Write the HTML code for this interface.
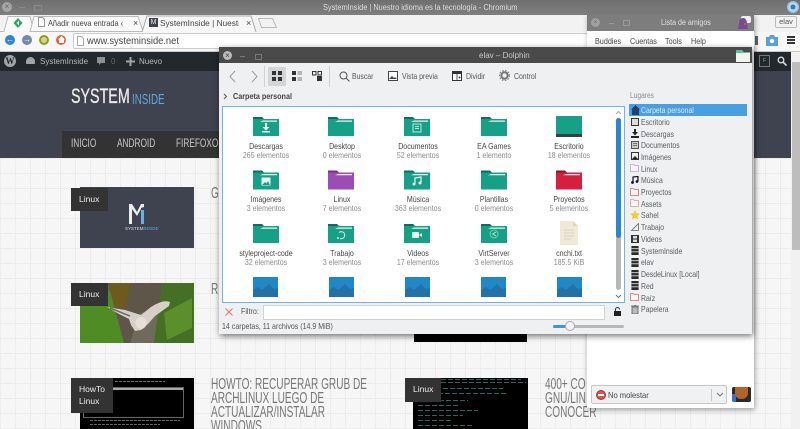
<!DOCTYPE html>
<html><head><meta charset="utf-8"><style>
html,body{margin:0;padding:0;width:800px;height:429px;overflow:hidden;background:#f5f5f5}
body{position:relative;font-family:"Liberation Sans",sans-serif;font-size:8.5px;color:#444;filter:blur(.35px)}
div,svg,span.a{position:absolute}
.t{position:absolute;white-space:nowrap;line-height:12px}
.c{transform:translateX(-50%) scaleX(.85);text-align:center}
.n{transform-origin:0 0;transform:scaleX(.72)}
.x{transform-origin:0 0;transform:scaleX(.83)}
.x9{transform-origin:0 0;transform:scaleX(.89)}
.nm{color:#444;font-size:8.300px}
.sb{color:#8a8d90;font-size:8.300px}
.sd{color:#5a5d60;font-size:8.500px;left:641px;transform-origin:0 0;transform:scaleX(.81)}
.h{font-size:15.500px;color:#777;line-height:14px;transform-origin:0 0;transform:scaleX(.65)}
.lab{background:#333;color:#eee;font-size:8.500px;line-height:12px}
</style></head><body>
<svg width="0" height="0" style="position:absolute"><defs>
<symbol id="f" viewBox="0 0 26 19"><path d="M0 2h26v17H0z" fill="#16a085"/><path d="M0 0h9l2 2H0z" fill="#0e6e5c"/><path d="M10 3.500h14v1.300H7z" fill="#e8f5f2"/></symbol>
<symbol id="pf" viewBox="0 0 26 19"><path d="M0 2h26v17H0z" fill="#9b4db5"/><path d="M0 0h9l2 2H0z" fill="#6f3382"/><path d="M10 3.500h14v1.300H7z" fill="#f3e8f7"/></symbol>
<symbol id="rf" viewBox="0 0 26 19"><path d="M0 2h26v17H0z" fill="#d81e3f"/><path d="M0 0h9l2 2H0z" fill="#7a2020"/><path d="M10 3.500h14v1.300H7z" fill="#fbe6ea"/></symbol>
<symbol id="im" viewBox="0 0 25 20"><rect width="25" height="20" fill="#1f88c6"/><path d="M0 20v-7l5-3 4 3 7-6 5 5 4-1v9z" fill="#2471a8"/></symbol>
<symbol id="srv" viewBox="0 0 8 10"><rect width="8" height="10" fill="#2a2a2a"/><path d="M0 3h8M0 6.500h8" stroke="#ddd"/></symbol>
<symbol id="lf" viewBox="0 0 9 8"><path d="M.5 .5h3l1 1h4v6h-8z" fill="#fdf7fa" stroke="currentColor" stroke-width=".8"/></symbol>
</defs></svg>

<!-- page background -->
<div style="left:0;top:158px;width:791px;height:271px;background-color:#f6f6f6;background-image:linear-gradient(#ececec 1px,transparent 1px),linear-gradient(90deg,#ececec 1px,transparent 1px);background-size:15px 15px"></div>
<div style="left:0;top:71px;width:791px;height:87px;background:#3f4350"></div>
<div style="left:0;top:52px;width:791px;height:19px;background:#23282d"></div>
<div style="left:791px;top:52px;width:9px;height:377px;background:#f1f1f1"></div>
<div style="left:792px;top:62px;width:8px;height:188px;background:#bdbdbd"></div>

<!-- WP bar -->
<div style="left:4px;top:55px;width:12px;height:12px;border-radius:50%;background:#a0a5aa;color:#23282d;font:bold 9px/12px 'Liberation Serif',serif;text-align:center">W</div>
<div style="left:26px;top:57px;width:9px;height:7px;border-radius:5px 5px 1px 1px;background:#a0a5aa"></div>
<span class="t" style="left:40px;top:56px;color:#b4b9be;font-size:8px">SystemInside</span>
<svg style="left:96px;top:56px" width="10" height="10"><path d="M1 1h8v6H5L3 9V7H1z" fill="#8c9095"/></svg>
<span class="t" style="left:111px;top:56px;color:#666;font-size:8px">0</span>
<svg style="left:126px;top:57px" width="9" height="9"><path d="M3.500 0h2v3.500H9v2H5.500V9h-2V5.500H0v-2h3.500z" fill="#a0a5aa"/></svg>
<span class="t" style="left:139px;top:56px;color:#b4b9be;font-size:8px">Nuevo</span>
<div style="left:759px;top:55px;width:9px;height:10px;border:1px solid #777;color:#999;font-size:5px;line-height:10px;text-align:center">F</div>
<svg style="left:777px;top:56px" width="10" height="10"><circle cx="4" cy="4" r="2.800" fill="none" stroke="#ddd" stroke-width="1.300"/><path d="M6 6l3.500 3.500" stroke="#ddd" stroke-width="1.600"/></svg>

<!-- site header -->
<span class="t" style="left:71px;top:87px;color:#ececec;font-size:21px;line-height:20px;transform-origin:0 0;transform:scaleX(.68);-webkit-text-stroke:.3px #ececec">SYSTEM</span>
<span class="t" style="left:132px;top:92px;color:#5fa8d8;font-size:15px;line-height:15px;transform-origin:0 0;transform:scaleX(.65)">INSIDE</span>
<div style="left:62px;top:131px;width:160px;height:27px;background:#333"></div>
<span class="t n" style="left:71px;top:138px;color:#c8c8c8;font-size:11.500px">INICIO</span>
<span class="t n" style="left:117px;top:138px;color:#c8c8c8;font-size:11.500px">ANDROID</span>
<span class="t n" style="left:176px;top:138px;color:#c8c8c8;font-size:11.500px">FIREFOXOS</span>

<!-- card 1 -->
<div style="left:80px;top:187px;width:114px;height:61px;background:#3f4350"></div>
<svg style="left:129px;top:204px" width="16" height="20"><path d="M0 0h3l5 8 4-8h3v3l-3 1v2H12v-1L8 12 3 5v15H0z" fill="#ececec"/><rect x="12" y="6" width="3" height="14" fill="#5fb3ea"/></svg>
<span class="t" style="left:125px;top:226px;color:#ddd;font-size:4.500px;line-height:6px">SYSTEM<span style="color:#5fa8d8">INSIDE</span></span>
<div class="lab" style="left:71px;top:188px;width:37px;height:23px"><span class="t" style="left:8px;top:5px">Linux</span></div>
<span class="t h" style="left:211px;top:187px">G</span>

<!-- card 2 -->
<svg style="left:80px;top:283px" width="114" height="60" viewBox="0 0 114 60"><rect width="114" height="60" fill="#4d7a28"/><path d="M0 20l30-12 10 30 10 22H0z" fill="#4f8c24"/><path d="M28 0h60l-12 60H44z" fill="#5e5648"/><path d="M30 0h20l-4 26-12-2z" fill="#6e5a1c"/><path d="M60 30l20-6 6 36H50z" fill="#6f6a5c"/><path d="M82 0h32v60H74z" fill="#456f24"/><path d="M84 30l28-15v30l-25 12z" fill="#5a8f2c"/><path d="M27 24l18 3 16 5 10-8c8-5 14-7 19-5l-1 4-14 10-7 8-7 6-6 1-4-6-2-6-10-5z" fill="#d6d0c8"/><ellipse cx="61" cy="40" rx="5.500" ry="6" fill="#e8e0d4"/><path d="M30 25l20 8" stroke="#6a6a70" stroke-width="1.500"/></svg>
<div class="lab" style="left:71px;top:283px;width:37px;height:23px"><span class="t" style="left:8px;top:5px">Linux</span></div>
<span class="t h" style="left:211px;top:283px">R</span>

<!-- card 3 -->
<svg style="left:80px;top:378px" width="114" height="51" viewBox="0 0 114 51"><rect width="114" height="51" fill="#000"/><rect x="3.500" y="9.500" width="100" height="30" fill="none" stroke="#666"/><rect x="5" y="10" width="98" height="2" fill="#aaa"/><path d="M35 3.500h50M10 42.500h90M10 46.500h70" stroke="#666" stroke-dasharray="3 1"/></svg>
<div class="lab" style="left:71px;top:378px;width:42px;height:35px"><span class="t" style="left:8px;top:5px">HowTo</span><span class="t" style="left:8px;top:17px">Linux</span></div>
<span class="t h" style="left:211px;top:378px">HOWTO: RECUPERAR GRUB DE</span>
<span class="t h" style="left:211px;top:392px">ARCHLINUX LUEGO DE</span>
<span class="t h" style="left:211px;top:406px">ACTUALIZAR/INSTALAR</span>
<span class="t h" style="left:211px;top:420px">WINDOWS</span>

<!-- card 4 -->
<div style="left:414px;top:334px;width:113px;height:8px;background:#000"></div>
<svg style="left:413px;top:378px" width="115" height="51" viewBox="0 0 115 51"><rect width="115" height="51" fill="#000"/><path d="M28 1.500h80M28 4.500h85M30 10.500h60M25 15.500h70M5 22.500h50M5 27.500h40M5 32.500h60M5 37.500h45M5 42.500h35M5 47.500h55" stroke="#2c8c7c" stroke-width=".8" stroke-dasharray="5 2"/></svg>
<div class="lab" style="left:405px;top:378px;width:36px;height:24px"><span class="t" style="left:8px;top:5px">Linux</span></div>
<span class="t h" style="left:545px;top:378px">400+ CO</span>
<span class="t h" style="left:545px;top:392px">GNU/LIN</span>
<span class="t h" style="left:545px;top:406px">CONOCER</span>

<!-- Chromium chrome -->
<div style="left:0;top:0;width:800px;height:15px;background:linear-gradient(#6f6f6f,#7f7f7f)"></div>
<div style="left:2px;top:2px;width:10px;height:10px;border-radius:50%;background:#a5a5a5;color:#666;font-size:8px;line-height:10px;text-align:center">×</div>
<div style="left:19px;top:7px;width:6px;height:1px;background:#8a8a8a"></div>
<div style="left:34px;top:5px;width:6px;height:4px;border:1px solid #8a8a8a"></div>
<span class="t x9" style="left:323px;top:1px;color:#dcdcdc;font-size:8.300px">SystemInside | Nuestro idioma es la tecnología - Chromium</span>
<div style="left:787px;top:1px;width:12px;height:12px;border-radius:50%;background:radial-gradient(circle,#2a7fd0 30%,#dfe6ec 32%,#9ec5e5 60%,#6ba7d8)"></div>
<div style="left:0;top:15px;width:800px;height:17px;background:#f2f2f2"></div>
<div style="left:0;top:32px;width:800px;height:20px;background:#f7f7f7"></div>
<div style="left:0;top:51px;width:800px;height:1px;background:#c8c8c8"></div>
<svg style="left:0;top:15px" width="280" height="18"><path d="M0 16.500h4l4-15h22l4 15" fill="#fafafa" stroke="#bbb"/><path d="M30 16.500l4-15h104l5 15z" fill="#fafafa" stroke="#bbb"/><path d="M142 17l5-16h104l5 16" fill="#f7f7f7" stroke="#aaa"/><path d="M258.500 3.500h14l4 9h-15z" fill="#f2f2f2" stroke="#bbb"/></svg>
<svg style="left:13px;top:17px" width="10" height="12"><path d="M5 1l4.500 5L5 11 .5 6z" fill="#2aa65a"/><path d="M3.500 6L6 3.500v5z" fill="#fff"/></svg>
<svg style="left:38px;top:17px" width="7" height="10"><path d="M.5 .5h4l2 2v7h-6z" fill="#fff" stroke="#999"/></svg>
<span class="t x9" style="left:48px;top:17px;font-size:8.300px;color:#444">Añadir nueva entrada ‹</span>
<span class="t" style="left:133px;top:17px;font-size:9px;color:#444">×</span>
<div style="left:149px;top:18px;width:9px;height:9px;background:#3f4350;color:#eee;font-size:7px;line-height:9px;text-align:center">M</div>
<span class="t" style="left:160px;top:17px;font-size:8.300px;color:#444;width:79px;overflow:hidden;display:block">SystemInside | Nuestro</span>
<span class="t" style="left:246px;top:17px;font-size:9px;color:#444">×</span>
<div style="left:775px;top:16px;width:20px;height:10px;border:1px solid #bbb;border-radius:2px;font-size:7.500px;line-height:10px;text-align:center;color:#555">elav</div>
<div style="left:5px;top:35px;width:10px;height:10px;border-radius:50%;background:#2a86d8;color:#fff;font-size:8px;line-height:9px;text-align:center">←</div>
<div style="left:22px;top:35px;width:10px;height:10px;border-radius:50%;background:#7489a8;color:#fff;font-size:8px;line-height:9px;text-align:center">→</div>
<div style="left:39px;top:35px;width:6px;height:6px;border-radius:50%;border:2px solid #8aa020;background:#d8d880"></div>
<div style="left:56px;top:35px;width:10px;height:10px;border-radius:50%;background:#e2643a"></div>
<svg style="left:58px;top:36px" width="7" height="7"><path d="M3.500 0L7 3.500H6V7H1V3.500H0z" fill="#fff"/></svg>
<div style="left:73px;top:33px;width:520px;height:16px;background:#fff;border:1px solid #ccc;border-right:0;border-radius:2px 0 0 2px;box-sizing:border-box"></div>
<svg style="left:77px;top:36px" width="7" height="10"><path d="M.5 .5h4l2 2v7h-6z" fill="#fff" stroke="#aaa"/></svg>
<span class="t x9" style="left:87px;top:35px;font-size:10.500px;color:#444">www.systeminside.net</span>
<div style="left:755px;top:36px;width:3px;height:9px;background:#566"></div>
<svg style="left:766px;top:35px" width="12" height="11"><path d="M0 2h3l1-2h4l1 2h3v9H0z" fill="#5aa0d8"/><circle cx="6" cy="6" r="2.200" fill="#fff"/></svg>
<div style="left:787px;top:36px;width:8px;height:8px;background:linear-gradient(#333 0 2px,transparent 2px 3px,#333 3px 5px,transparent 5px 6px,#333 6px 8px)"></div>

<!-- Buddy list -->
<div style="left:587px;top:14px;width:167px;height:394px;background:#fff;box-shadow:1px 2px 5px rgba(0,0,0,.35)"></div>
<div style="left:587px;top:14px;width:167px;height:17px;background:#7d7d7d"></div>
<div style="left:591px;top:18px;width:9px;height:9px;border-radius:50%;background:#a0a0a0;color:#777;font-size:7px;line-height:9px;text-align:center">×</div>
<div style="left:609px;top:23px;width:5px;height:1px;background:#999"></div>
<div style="left:623px;top:20px;width:5px;height:4px;border:1px solid #999"></div>
<span class="t x9" style="left:661px;top:17px;font-size:8px;color:#e0e0e0">Lista de amigos</span>
<div style="left:741px;top:16px;width:10px;height:7px;background:#eee;border-radius:2px"></div>
<svg style="left:738px;top:18px" width="10" height="11"><path d="M5 0c3 0 4 3 4 6l1 5H0l1-5c0-3 1-6 4-6z" fill="#7a4a90"/><circle cx="7" cy="6" r="1" fill="#e56"/></svg>
<span class="t x" style="left:595px;top:35px;font-size:8.700px;color:#444">Buddies</span>
<span class="t x" style="left:630px;top:35px;font-size:8.700px;color:#444">Cuentas</span>
<span class="t x" style="left:665px;top:35px;font-size:8.700px;color:#444">Tools</span>
<span class="t x" style="left:691px;top:35px;font-size:8.700px;color:#444">Help</span>
<div style="left:591px;top:385px;width:136px;height:19px;background:#f0f1f2;border:1px solid #c4c6c8;border-radius:2px;box-sizing:border-box"></div>
<div style="left:596px;top:390px;width:10px;height:10px;border-radius:50%;background:#d9534f;border:.5px solid #a33;box-sizing:border-box"></div>
<div style="left:598px;top:394px;width:6px;height:2px;background:#fff"></div>
<span class="t x9" style="left:608px;top:389px;font-size:8.500px;color:#444">No molestar</span>
<div style="left:711px;top:389px;width:1px;height:12px;background:#c4c6c8"></div>
<svg style="left:716px;top:392px" width="8" height="5"><path d="M1 1l3 3 3-3" fill="none" stroke="#777"/></svg>
<div style="left:732px;top:387px;width:19px;height:15px;background:#2a2a2a;border-radius:2px;overflow:hidden"><div style="left:0;top:7px;width:4px;height:8px;background:#3a70c8"></div><div style="left:3px;top:0;width:13px;height:12px;background:#b5622a;border-radius:0 0 6px 6px"></div></div>

<!-- Dolphin -->
<div style="left:219px;top:47px;width:533px;height:287px;background:#eff0f1;box-shadow:1px 2px 6px rgba(0,0,0,.55)"></div>
<div style="left:219px;top:47px;width:533px;height:16px;background:#4a4a4a"></div>
<div style="left:223px;top:51px;width:9px;height:9px;border-radius:50%;background:#bbb;color:#444;font-size:8px;line-height:9px;text-align:center">×</div>
<div style="left:240px;top:56px;width:5px;height:1px;background:#777"></div>
<div style="left:255px;top:54px;width:5px;height:4px;border:1px solid #777"></div>
<span class="t" style="left:479px;top:50px;font-size:8px;color:#c8c8c8">elav – Dolphin</span>
<svg style="left:736px;top:49px" width="14" height="13"><path d="M0 1h6l2 2h6v10H0z" fill="#5dbf9f"/><path d="M0 4h14v9H0z" fill="#f2f5ee"/></svg>

<svg style="left:228px;top:70px" width="30" height="13"><path d="M7 1L2 6.500 7 12M24 1l5 5.500L24 12" fill="none" stroke="#9a9da0"/></svg>
<div style="left:264px;top:66px;width:1px;height:21px;background:#d0d2d4"></div>
<div style="left:329px;top:66px;width:1px;height:21px;background:#d0d2d4"></div>
<div style="left:268px;top:67px;width:18px;height:19px;background:#d4d5d6;border-radius:1px"></div>
<svg style="left:272px;top:71px" width="10" height="10"><path d="M0 0h4v4H0zM6 0h4v4H6zM0 6h4v4H0zM6 6h4v4H6z" fill="#333"/></svg>
<svg style="left:292px;top:71px" width="10" height="10"><path d="M0 0h4v4H0zM0 6h4v4H0z" fill="#333"/><path d="M5.500 1h4.500M5.500 3h4.500M5.500 7h4.500M5.500 9h4.500" stroke="#555" stroke-width=".8"/></svg>
<svg style="left:312px;top:71px" width="10" height="10"><path d="M.5 .5h3.500v3.500H.5zM6 .5h3.500v3.500H6z" fill="none" stroke="#333"/><path d="M5 5h5v5H5z" fill="#333"/></svg>
<svg style="left:339px;top:71px" width="11" height="11"><circle cx="4.500" cy="4.500" r="3.500" fill="none" stroke="#555"/><path d="M7 7l3.500 3.500" stroke="#555"/></svg>
<span class="t x" style="left:352px;top:70px;font-size:8.300px;color:#555">Buscar</span>
<svg style="left:388px;top:71px" width="10" height="10"><rect x=".5" y=".5" width="9" height="9" fill="#fff" stroke="#444"/><path d="M1 8l3-3 2 2 1-1 2 2z" fill="#444"/></svg>
<span class="t x" style="left:402px;top:70px;font-size:8.300px;color:#555">Vista previa</span>
<svg style="left:452px;top:71px" width="10" height="10"><rect x=".5" y=".5" width="9" height="9" fill="#fff" stroke="#333"/><path d="M0 1h10v2H0z" fill="#333"/><path d="M5 3v7M6.500 6.500h2M7.500 5.500v2" stroke="#333" stroke-width=".8"/></svg>
<span class="t x" style="left:466px;top:70px;font-size:8.300px;color:#555">Dividir</span>
<svg style="left:499px;top:70px" width="11" height="11"><circle cx="5.500" cy="5.500" r="3.200" fill="none" stroke="#777" stroke-width="2"/><circle cx="5.500" cy="5.500" r="5" fill="none" stroke="#888" stroke-width="1.300" stroke-dasharray="1.500 1.500"/></svg>
<span class="t x" style="left:514px;top:70px;font-size:8.300px;color:#555">Control</span>

<svg style="left:223px;top:93px" width="5" height="7"><path d="M1 1l2.500 2.500L1 6" fill="none" stroke="#555"/></svg>
<span class="t" style="left:233px;top:90px;font-size:8.300px;font-weight:bold;color:#444;transform-origin:0 0;transform:scaleX(.87)">Carpeta personal</span>

<!-- file view -->
<div style="left:222px;top:106px;width:403px;height:197px;background:#fff;border:1px solid #70b4e6;box-sizing:border-box"></div>
<div style="left:616px;top:118px;width:5px;height:172px;background:#b5b7b9;border-radius:3px"></div>
<div style="left:616px;top:118px;width:5px;height:120px;background:#2a86d4;border-radius:3px"></div>
<svg style="left:615px;top:110px" width="7" height="5"><path d="M1 4l2.500-2.500L6 4" fill="none" stroke="#aaa"/></svg>
<svg style="left:615px;top:294px" width="7" height="5"><path d="M1 1l2.500 2.500L6 1" fill="none" stroke="#777"/></svg>

<svg style="left:253px;top:117px" width="26" height="19"><use href="#f"/></svg>
<svg style="left:261px;top:122px" width="10" height="11"><path d="M4 1h2v4h2.500L5 8.500 1.500 5H4zM1 9h8v1.500H1z" fill="#e5f5f1"/></svg>
<svg style="left:328px;top:117px" width="26" height="19"><use href="#f"/></svg>
<svg style="left:404px;top:117px" width="26" height="19"><use href="#f"/></svg>
<svg style="left:412px;top:123px" width="10" height="10"><rect x="1" y="1" width="8" height="8" fill="none" stroke="#bfe5db"/><path d="M3 3.500h4M3 5.500h4" stroke="#bfe5db"/></svg>
<svg style="left:481px;top:117px" width="26" height="19"><use href="#f"/></svg>
<div style="left:556px;top:116px;width:26px;height:18px;background:#16a085"></div><div style="left:556px;top:134px;width:26px;height:3px;background:#3a3f40"></div>

<svg style="left:253px;top:170px" width="26" height="20"><use href="#f"/></svg>
<svg style="left:261px;top:177px" width="10" height="9"><rect x=".5" y=".5" width="9" height="8" fill="#e5f5f1"/><path d="M1 8l3-3 1.500 1.500L7 4l2 4z" fill="#16a085"/></svg>
<svg style="left:328px;top:170px" width="26" height="20"><use href="#pf"/></svg>
<svg style="left:404px;top:170px" width="26" height="20"><use href="#f"/></svg>
<svg style="left:412px;top:176px" width="10" height="10"><path d="M3 8V2l6-1v6" fill="none" stroke="#e5f5f1" stroke-width="1.200"/><circle cx="2" cy="8" r="1.500" fill="#e5f5f1"/><circle cx="8" cy="7" r="1.500" fill="#e5f5f1"/></svg>
<svg style="left:481px;top:170px" width="26" height="20"><use href="#f"/></svg>
<svg style="left:556px;top:170px" width="26" height="20"><use href="#rf"/></svg>

<svg style="left:253px;top:224px" width="26" height="19"><use href="#f"/></svg>
<svg style="left:328px;top:224px" width="26" height="19"><use href="#f"/></svg>
<svg style="left:336px;top:230px" width="10" height="10"><path d="M3 2.500A3.500 3.500 0 1 1 4 8.500" fill="none" stroke="#d5efe8"/><circle cx="2" cy="8" r="1" fill="#d5efe8"/></svg>
<svg style="left:404px;top:224px" width="26" height="19"><use href="#f"/></svg>
<svg style="left:412px;top:231px" width="11" height="8"><rect x="0" y="1" width="7" height="6" rx="1" fill="#e5f5f1"/><path d="M7 4l3-2v4z" fill="#e5f5f1"/></svg>
<svg style="left:481px;top:224px" width="26" height="19"><use href="#f"/></svg>
<svg style="left:489px;top:229px" width="10" height="10"><circle cx="5" cy="5" r="4" fill="none" stroke="#8fd3c2" stroke-width=".8"/><path d="M7 3L3.500 5 7 7" fill="none" stroke="#c5ebe1" stroke-width=".8"/></svg>
<svg style="left:560px;top:221px" width="18" height="24"><path d="M0 0h13l5 5v19H0z" fill="#efe9da"/><path d="M13 0l5 5h-5z" fill="#ddd6c6"/><path d="M4 9h10M4 12h10M4 15h10M4 18h7" stroke="#dcd4c0"/></svg>

<svg style="left:253px;top:277px" width="25" height="20"><use href="#im"/></svg>
<svg style="left:329px;top:277px" width="25" height="20"><use href="#im"/></svg>
<svg style="left:405px;top:277px" width="25" height="20"><use href="#im"/></svg>
<svg style="left:481px;top:277px" width="25" height="20"><use href="#im"/></svg>
<svg style="left:557px;top:277px" width="25" height="20"><use href="#im"/></svg>

<span class="t c nm" style="left:266px;top:140px">Descargas</span><span class="t c sb" style="left:266px;top:149px">265 elementos</span>
<span class="t c nm" style="left:342px;top:140px">Desktop</span><span class="t c sb" style="left:342px;top:149px">0 elementos</span>
<span class="t c nm" style="left:418px;top:140px">Documentos</span><span class="t c sb" style="left:418px;top:149px">52 elementos</span>
<span class="t c nm" style="left:494px;top:140px">EA Games</span><span class="t c sb" style="left:494px;top:149px">1 elemento</span>
<span class="t c nm" style="left:569px;top:140px">Escritorio</span><span class="t c sb" style="left:569px;top:149px">18 elementos</span>

<span class="t c nm" style="left:266px;top:193px">Imágenes</span><span class="t c sb" style="left:266px;top:202px">3 elementos</span>
<span class="t c nm" style="left:342px;top:193px">Linux</span><span class="t c sb" style="left:342px;top:202px">7 elementos</span>
<span class="t c nm" style="left:418px;top:193px">Música</span><span class="t c sb" style="left:418px;top:202px">363 elementos</span>
<span class="t c nm" style="left:494px;top:193px">Plantillas</span><span class="t c sb" style="left:494px;top:202px">0 elementos</span>
<span class="t c nm" style="left:569px;top:193px">Proyectos</span><span class="t c sb" style="left:569px;top:202px">5 elementos</span>

<span class="t c nm" style="left:266px;top:247px">styleproject-code</span><span class="t c sb" style="left:266px;top:256px">32 elementos</span>
<span class="t c nm" style="left:342px;top:247px">Trabajo</span><span class="t c sb" style="left:342px;top:256px">3 elementos</span>
<span class="t c nm" style="left:418px;top:247px">Videos</span><span class="t c sb" style="left:418px;top:256px">17 elementos</span>
<span class="t c nm" style="left:494px;top:247px">VirtServer</span><span class="t c sb" style="left:494px;top:256px">3 elementos</span>
<span class="t c nm" style="left:569px;top:247px">cnchi.txt</span><span class="t c sb" style="left:569px;top:256px">185.5 KiB</span>

<!-- filter/status -->
<svg style="left:225px;top:308px" width="8" height="8"><path d="M.5 .5l7 7M7.500 .5l-7 7" stroke="#e07060" stroke-width=".9"/></svg>
<span class="t x9" style="left:241px;top:306px;font-size:8px;color:#555">Filtro:</span>
<div style="left:263px;top:305px;width:342px;height:15px;background:#fff;border:1px solid #d0d2d4;box-sizing:border-box"></div>
<svg style="left:614px;top:307px" width="7" height="9"><path d="M1.500 4V2.500a2 2 0 0 1 4 0" fill="none" stroke="#333"/><rect y="4" width="7" height="5" fill="#222"/></svg>
<span class="t" style="left:222px;top:320px;font-size:8.300px;color:#555;transform-origin:0 0;transform:scaleX(.85)">14 carpetas, 11 archivos (14.9 MiB)</span>
<div style="left:553px;top:325px;width:71px;height:3px;background:#b5b7b9;border-radius:2px"></div>
<div style="left:553px;top:325px;width:14px;height:3px;background:#3d95dd;border-radius:2px"></div>
<div style="left:565px;top:321px;width:10px;height:10px;border-radius:50%;background:#f2f3f4;border:1px solid #a8aaac;box-sizing:border-box"></div>

<!-- places -->
<span class="t x" style="left:630px;top:90px;font-size:8px;color:#8a8d90">Lugares</span>
<div style="left:629px;top:104px;width:118px;height:12px;background:#4a9fe2"></div>
<svg style="left:631px;top:105px" width="9" height="10"><path d="M4.500 0L9 4.500H8V10H1V4.500H0z" fill="#1f3f78"/></svg>
<span class="t sd" style="top:104px;color:#dcebf8">Carpeta personal</span>
<svg style="left:631px;top:118px" width="8" height="8"><rect x=".5" y=".5" width="7" height="7" fill="#ddd" stroke="#333"/></svg><span class="t sd" style="top:116px">Escritorio</span>
<svg style="left:631px;top:129px" width="8" height="9"><path d="M3 0h2v3h2L4 6.500 1 3h2zM0 7h8v2H0z" fill="#222"/></svg><span class="t sd" style="top:127.500px">Descargas</span>
<svg style="left:631px;top:141px" width="8" height="8"><rect x=".5" y=".5" width="7" height="7" fill="#ccc" stroke="#555"/><path d="M2 2.500h4M2 4.500h4" stroke="#555" stroke-width=".7"/></svg><span class="t sd" style="top:139px">Documentos</span>
<svg style="left:631px;top:152px" width="8" height="8"><rect x=".5" y=".5" width="7" height="7" fill="#eee" stroke="#333"/><path d="M1 7l3-3 3 3z" fill="#222"/></svg><span class="t sd" style="top:150.500px">Imágenes</span>
<svg style="left:630px;top:164px;color:#c79bd8" width="9" height="8"><use href="#lf"/></svg><span class="t sd" style="top:162.500px">Linux</span>
<svg style="left:631px;top:176px" width="8" height="8"><path d="M2 6V1l5-.5V5" fill="none" stroke="#111" stroke-width="1.200"/><circle cx="1.500" cy="6.500" r="1.400" fill="#111"/><circle cx="6" cy="5.500" r="1.400" fill="#111"/></svg><span class="t sd" style="top:174px">Música</span>
<svg style="left:630px;top:188px;color:#e2685a" width="9" height="8"><use href="#lf"/></svg><span class="t sd" style="top:186px">Proyectos</span>
<svg style="left:630px;top:199px;color:#e29a8a" width="9" height="8"><use href="#lf"/></svg><span class="t sd" style="top:197.500px">Assets</span>
<svg style="left:630px;top:210px" width="10" height="10"><path d="M5 0l1.500 3.300L10 3.700 7.400 6l.8 3.500L5 7.700 1.800 9.500 2.600 6 0 3.700l3.500-.4z" fill="#f0cc30"/></svg><span class="t sd" style="top:209px">Sahel</span>
<svg style="left:631px;top:223px" width="8" height="8"><path d="M.5 7.500L7.500 .5v7z" fill="none" stroke="#666" stroke-width=".8"/></svg><span class="t sd" style="top:221px">Trabajo</span>
<svg style="left:631px;top:235px" width="8" height="8"><rect width="8" height="8" fill="#333"/><rect x="2" y="1" width="4" height="2.500" fill="#ddd"/><rect x="2" y="4.500" width="4" height="2.500" fill="#ddd"/></svg><span class="t sd" style="top:233px">Videos</span>
<svg style="left:631px;top:246px" width="8" height="9"><use href="#srv"/></svg><span class="t sd" style="top:244.500px">SystemInside</span>
<svg style="left:631px;top:258px" width="8" height="9"><use href="#srv"/></svg><span class="t sd" style="top:256px">elav</span>
<svg style="left:631px;top:270px" width="8" height="9"><use href="#srv"/></svg><span class="t sd" style="top:268px">DesdeLinux [Local]</span>
<svg style="left:631px;top:281px" width="8" height="9"><use href="#srv"/></svg><span class="t sd" style="top:279.500px">Red</span>
<svg style="left:630px;top:293px;color:#e2685a" width="9" height="8"><use href="#lf"/></svg><span class="t sd" style="top:291.500px">Raíz</span>
<svg style="left:631px;top:305px" width="8" height="9"><path d="M1 2h6v7H1zM0 1h8M3 0h2" fill="#bbb" stroke="#555" stroke-width=".8"/></svg><span class="t sd" style="top:303px">Papelera</span>
</body></html>
